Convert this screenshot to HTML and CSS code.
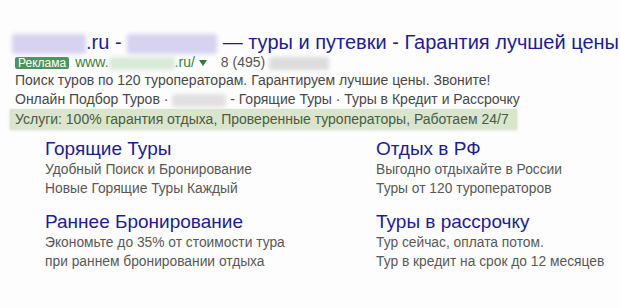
FILE: index.html
```html
<!DOCTYPE html>
<html lang="ru">
<head>
    <meta charset="UTF-8">
    <title>Реклама</title>
    <link rel="stylesheet" href="styles.css">
</head>
<body>

<div class="ad">
    <div class="title">
        <span class="blur blur-title1"></span>.ru - <span class="blur blur-title2"></span> — туры и путевки - Гарантия лучшей цены
    </div>
    <div class="url-line">
        <span class="badge">Реклама</span>
        <span class="url">www.<span class="blur blur-url"></span>.ru/</span>
        <span class="arrow"></span>
        <span class="phone">8 (495) <span class="blur blur-phone"></span></span>
    </div>
    <div class="text">Поиск туров по 120 туроператорам. Гарантируем лучшие цены. Звоните!</div>
    <div class="text">Онлайн Подбор Туров · <span class="blur blur-link"></span> - Горящие Туры · Туры в Кредит и Рассрочку</div>
    <div class="services">Услуги: 100% гарантия отдыха, Проверенные туроператоры, Работаем 24/7</div>

    <div class="sitelinks">
        <div class="sitelink">
            <div class="sl-title">Горящие Туры</div>
            <div class="sl-text">Удобный Поиск и Бронирование</div>
            <div class="sl-text">Новые Горящие Туры Каждый</div>
        </div>
        <div class="sitelink">
            <div class="sl-title">Отдых в РФ</div>
            <div class="sl-text">Выгодно отдыхайте в России</div>
            <div class="sl-text">Туры от 120 туроператоров</div>
        </div>
        <div class="sitelink">
            <div class="sl-title">Раннее Бронирование</div>
            <div class="sl-text">Экономьте до 35% от стоимости тура</div>
            <div class="sl-text">при раннем бронировании отдыха</div>
        </div>
        <div class="sitelink">
            <div class="sl-title">Туры в рассрочку</div>
            <div class="sl-text">Тур сейчас, оплата потом.</div>
            <div class="sl-text">Тур в кредит на срок до 12 месяцев</div>
        </div>
    </div>
</div>

</body>
</html>
```

FILE: styles.css
```css
/* Search ad block */
body {
    margin: 0;
    background: #fdfdfd;
    font-family: "Liberation Sans", Arial, sans-serif;
    color: #484848;
}
.ad {
    padding: 30px 0 0 12px;
}
.title {
    font-size: 20px;
    line-height: 24px;
    color: #231c8e;
    white-space: nowrap;
}
.blur {
    display: inline-block;
    vertical-align: middle;
    border-radius: 3px;
    filter: blur(2px);
}
.blur-title1 {
    width: 74px;
    height: 20px;
    background: #d6d2f0;
}
.blur-title2 {
    width: 90px;
    height: 20px;
    background: #d6d2f0;
}
.url-line {
    display: flex;
    align-items: center;
    font-size: 14px;
    line-height: 17px;
}
.badge {
    background: #4e9260;
    color: #fff;
    font-size: 12px;
    line-height: 12px;
    padding: 0 3px;
    border-radius: 2px;
    margin: 0 6px 0 3px;
}
.url {
    color: #3a7f3a;
}
.blur-url {
    width: 66px;
    height: 13px;
    background: #d8ead8;
}
.arrow {
    width: 0;
    height: 0;
    border-left: 4px solid transparent;
    border-right: 4px solid transparent;
    border-top: 6px solid #2f7a3a;
    margin: 0 14px 0 4px;
}
.phone {
    color: #555;
}
.blur-phone {
    width: 60px;
    height: 13px;
    background: #dcdcdc;
}
.blur-link {
    width: 54px;
    height: 13px;
    background: #e0e0e0;
}
.text {
    font-size: 14px;
    line-height: 19px;
    padding-left: 3px;
    white-space: nowrap;
}
.services {
    display: inline-block;
    font-size: 14px;
    line-height: 20px;
    padding: 0 8px 0 5px;
    margin-left: -2px;
    background: #d9e5cc;
    color: #4d5a42;
    white-space: nowrap;
    box-shadow: 0 1px 3px rgba(150, 170, 130, 0.4);
}
.sitelinks {
    display: grid;
    grid-template-columns: 331px 240px;
    row-gap: 13px;
    padding: 9px 0 0 33px;
}
.sl-title {
    font-size: 19px;
    line-height: 22px;
    color: #231c8e;
}
.sl-text {
    font-size: 13.8px;
    line-height: 19px;
    color: #585858;
}
```
